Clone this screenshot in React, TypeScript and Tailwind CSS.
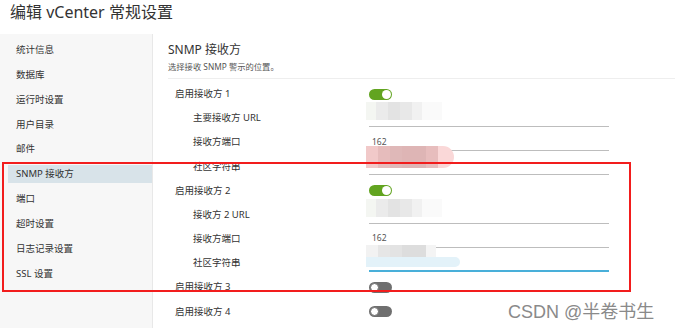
import React from "react";

const navItems = [
  "统计信息",
  "数据库",
  "运行时设置",
  "用户目录",
  "邮件",
  "SNMP 接收方",
  "端口",
  "超时设置",
  "日志记录设置",
  "SSL 设置",
];

const font = { fontFamily: '"Noto Sans", "Noto Sans CJK SC", sans-serif' };

function Toggle({ on }: { on: boolean }) {
  return (
    <div
      className={`flex h-[11px] w-[23px] items-center rounded-full px-[1px] ${
        on ? "justify-end bg-[#62a420]" : "justify-start bg-[#6f6f6f]"
      }`}
    >
      <div
        className={`h-[9px] w-[9px] rounded-full bg-white ${on ? "" : "border border-[#6f6f6f]"}`}
      />
    </div>
  );
}

type Blur = "gray" | "pink" | "blue";

function Input({ value, blur, focused }: { value?: string; blur?: Blur; focused?: boolean }) {
  return (
    <div
      className={`relative flex h-[17px] w-[240px] items-center pl-[3px] text-[8.5px] text-[#555] ${
        focused ? "border-b-[2px] border-[#49afd9]" : "border-b border-[#bdbdbd]"
      }`}
    >
      {value}
      {blur === "gray" && (
        <div className="absolute left-[-3px] top-[-8px] flex h-[18px] w-[76px] items-stretch">
          <div className="w-[10px] bg-[#f4f6f2]" />
          <div className="w-[12px] bg-[#ebebeb]" />
          <div className="w-[12px] bg-[#e3e3e3]" />
          <div className="w-[12px] bg-[#e8e8e8]" />
          <div className="w-[10px] bg-[#f1f1f1]" />
          <div className="w-[20px] bg-[#fafafa]" />
        </div>
      )}
      {blur === "pink" && (
        <div className="absolute left-[-3px] top-[-12px] flex h-[22px] w-[88px] items-stretch overflow-hidden rounded-r-full">
          <div className="w-[12px] bg-[#f1c9c9]" />
          <div className="w-[12px] bg-[#e6bcbc]" />
          <div className="w-[12px] bg-[#dfb8b8]" />
          <div className="w-[24px] bg-[#deb5b5]" />
          <div className="w-[12px] bg-[#e7bdbd]" />
          <div className="w-[16px] bg-[#fad8d8]" />
        </div>
      )}
      {blur === "blue" && (
        <>
          <div className="absolute left-[-3px] top-[-10px] flex h-[12px] w-[70px] items-stretch">
            <div className="w-[12px] bg-[#f2f2f2]" />
            <div className="w-[12px] bg-[#e6e6e6]" />
            <div className="w-[12px] bg-[#e3e3e3]" />
            <div className="w-[24px] bg-[#dddddd]" />
            <div className="w-[10px] bg-[#f4f4f4]" />
          </div>
          <div className="absolute left-[-3px] top-[2px] h-[10px] w-[94px] rounded-r-full bg-[#e3f2f9]" />
        </>
      )}
    </div>
  );
}

function Row({ label, sub, children }: { label: string; sub?: boolean; children: React.ReactNode }) {
  return (
    <div className="flex h-[24.2px] items-center">
      <div className={`${sub ? "w-[199px] pl-[25px]" : "w-[199px] pl-[7px]"} text-[9.5px] text-[#333]`}>
        {label}
      </div>
      <div className="pl-[2px]">{children}</div>
    </div>
  );
}

export default function App() {
  return (
    <div className="relative h-[328px] w-[675px] overflow-hidden bg-white" style={font}>
      <div className="flex h-[34px] items-start pl-[10px] pt-[0px] text-[16px] leading-[24px] text-[#333]">
        编辑 vCenter 常规设置
      </div>
      <div className="flex h-[294px]">
        <div className="w-[153px] border-r border-[#e8e8e8] bg-[#f7f7f7] pt-[7px]">
          <div className="flex flex-col gap-[6.9px]">
            {navItems.map((item) => (
              <div
                key={item}
                className={`ml-[8px] flex h-[18px] items-center pl-[8px] text-[9.5px] text-[#333] ${
                  item === "SNMP 接收方" ? "bg-[#d8e3e9]" : ""
                }`}
              >
                {item}
              </div>
            ))}
          </div>
        </div>
        <div className="flex-1 pl-[15px]">
          <div className="pt-[8px] text-[12px] leading-[16px] text-[#333]">SNMP 接收方</div>
          <div className="mt-[3px] text-[8.3px] leading-[12px] text-[#555]">选择接收 SNMP 警示的位置。</div>
          <div className="mt-[5px] border-b border-[#eeeeee]" />
          <div className="pt-[3px]">
            <Row label="启用接收方 1">
              <Toggle on />
            </Row>
            <Row label="主要接收方 URL" sub>
              <Input blur="gray" />
            </Row>
            <Row label="接收方端口" sub>
              <Input value="162" />
            </Row>
            <Row label="社区字符串" sub>
              <Input blur="pink" />
            </Row>
            <Row label="启用接收方 2">
              <Toggle on />
            </Row>
            <Row label="接收方 2 URL" sub>
              <Input blur="gray" />
            </Row>
            <Row label="接收方端口" sub>
              <Input value="162" />
            </Row>
            <Row label="社区字符串" sub>
              <Input blur="blue" focused />
            </Row>
            <Row label="启用接收方 3">
              <Toggle on={false} />
            </Row>
            <Row label="启用接收方 4">
              <Toggle on={false} />
            </Row>
          </div>
        </div>
      </div>

      {/* annotation box */}
      <div className="pointer-events-none absolute left-[2px] top-[162px] h-[130px] w-[629px] border-[2px] border-[#f21d1d]" />

      {/* watermark */}
      <div
        className="pointer-events-none absolute left-[508px] top-[301px] text-[18px] leading-[22px] text-[#8a8a8a]"
        style={{ fontFamily: '"Liberation Sans", "Noto Sans CJK SC", sans-serif' }}
      >
        CSDN @半卷书生
      </div>
    </div>
  );
}
